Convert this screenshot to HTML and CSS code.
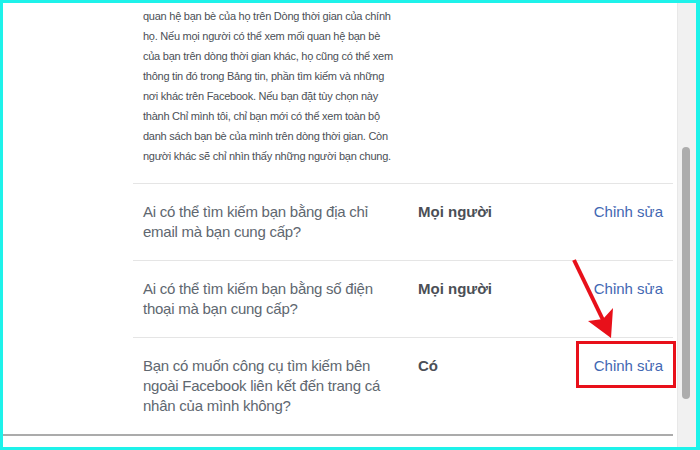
FILE: index.html
```html
<!DOCTYPE html>
<html lang="vi">
<head>
    <meta charset="UTF-8">
    <title>Cài đặt quyền riêng tư</title>
    <link rel="stylesheet" href="styles.css">
</head>
<body>

<div class="frame">
    <div class="page">
        <div class="content">
            <div class="settings">
                <div class="desc">
                    <p>quan hệ bạn bè của họ trên Dòng thời gian của chính<br>
                    họ. Nếu mọi người có thể xem mối quan hệ bạn bè<br>
                    của bạn trên dòng thời gian khác, họ cũng có thể xem<br>
                    thông tin đó trong Bảng tin, phần tìm kiếm và những<br>
                    nơi khác trên Facebook. Nếu bạn đặt tùy chọn này<br>
                    thành Chỉ mình tôi, chỉ bạn mới có thể xem toàn bộ<br>
                    danh sách bạn bè của mình trên dòng thời gian. Còn<br>
                    người khác sẽ chỉ nhìn thấy những người bạn chung.</p>
                </div>

                <div class="row">
                    <div class="question">Ai có thể tìm kiếm bạn bằng địa chỉ email mà bạn cung cấp?</div>
                    <div class="value">Mọi người</div>
                    <a class="edit" href="#">Chỉnh sửa</a>
                </div>

                <div class="row">
                    <div class="question">Ai có thể tìm kiếm bạn bằng số điện thoại mà bạn cung cấp?</div>
                    <div class="value">Mọi người</div>
                    <a class="edit" href="#">Chỉnh sửa</a>
                </div>

                <div class="row last">
                    <div class="question">Bạn có muốn công cụ tìm kiếm bên ngoài Facebook liên kết đến trang cá nhân của mình không?</div>
                    <div class="value">Có</div>
                    <a class="edit marked" href="#">Chỉnh sửa</a>
                </div>
            </div>
            <div class="bottom-line"></div>
        </div>

        <div class="scrollbar">
            <div class="thumb"></div>
        </div>
    </div>

    <!-- mũi tên chú thích -->
    <svg class="arrow" width="700" height="450" viewBox="0 0 700 450">
        <line x1="574" y1="260" x2="604" y2="322" stroke="#e8101a" stroke-width="4"/>
        <polygon points="611,338 588,321 603,319 613,308" fill="#e8101a"/>
    </svg>
</div>

</body>
</html>
```

FILE: styles.css
```css
body {
    margin: 0;
    padding: 0;
    font-family: "Liberation Sans", Arial, sans-serif;
    background-color: #ffffff;
}
.frame {
    position: relative;
    width: 700px;
    height: 450px;
    box-sizing: border-box;
    border-style: solid;
    border-color: #1ef2ea;
    border-width: 3px 4px 3px 3px;
    overflow: hidden;
}
.page {
    display: flex;
    height: 100%;
}
.content {
    width: 670px;
    margin-right: 4px;
}
.settings {
    margin-left: 130px;
}
.desc {
    padding: 3px 10px 17px 10px;
    border-bottom: 1px solid #e5e5e5;
}
.desc p {
    margin: 0;
    font-size: 11px;
    letter-spacing: -0.25px;
    line-height: 20px;
    white-space: nowrap;
    color: #4b4f56;
}
.row {
    display: grid;
    grid-template-columns: 266px 1fr auto;
    column-gap: 9px;
    padding: 18px 10px 18px 10px;
    border-bottom: 1px solid #e5e5e5;
}
.row.last {
    border-bottom: none;
}
.question {
    font-size: 15px;
    letter-spacing: -0.25px;
    line-height: 20px;
    color: #606770;
    padding-right: 20px;
}
.value {
    font-size: 15px;
    line-height: 20px;
    font-weight: bold;
    color: #4b4f56;
}
.edit {
    font-size: 15px;
    line-height: 20px;
    color: #4267b2;
    text-decoration: none;
    align-self: start;
}
.edit.marked {
    position: relative;
}
.edit.marked::after {
    content: "";
    position: absolute;
    top: -15px;
    left: -18px;
    right: -13px;
    bottom: -12px;
    border: 3px solid #e8101a;
}
.bottom-line {
    height: 2px;
    background-color: #ababab;
}
.scrollbar {
    width: 19px;
    background-color: #f1f1f1;
    border-left: 1px solid #e8e8e8;
    padding: 144px 0 0 4px;
    box-sizing: border-box;
}
.thumb {
    width: 8px;
    height: 252px;
    border-radius: 4px;
    background-color: #adadad;
}
.arrow {
    position: absolute;
    left: -3px;
    top: -3px;
    pointer-events: none;
}
```
